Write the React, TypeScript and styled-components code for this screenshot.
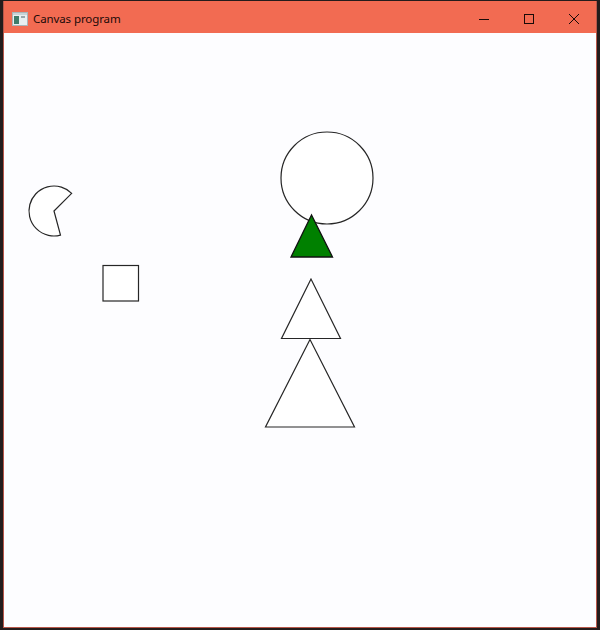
import React from "react";
import styled, { createGlobalStyle } from "styled-components";

const Global = createGlobalStyle`
  html, body { margin: 0; padding: 0; background: #241c1c; }
  body { width: 600px; height: 630px; overflow: hidden; font-family: "Noto Sans", "Open Sans", sans-serif; }
`;

const Desktop = styled.div`
  width: 600px;
  height: 630px;
  display: flex;
  padding: 1px 3px 2px 3px;
  box-sizing: border-box;
`;

const Window = styled.div`
  flex: 1;
  display: flex;
  flex-direction: column;
  border: 1px solid #b8574a;
  border-top: none;
  background: #fdfdff;
`;

const TitleBar = styled.div`
  height: 32px;
  box-sizing: border-box;
  padding-top: 3px;
  background: #f26b52;
  display: flex;
  align-items: center;
  padding-left: 8px;
  flex-shrink: 0;
`;

const AppIcon = styled.div`
  width: 16px;
  height: 16px;
  display: flex;
  align-items: center;
`;

const Title = styled.span`
  margin-left: 5px;
  font-size: 11.5px;
  letter-spacing: -0.1px;
  color: #1a0a08;
  flex: 1;
  padding-bottom: 1px;
`;

const Controls = styled.div`
  display: flex;
  height: 100%;
`;

const ControlButton = styled.div`
  width: 45px;
  height: 100%;
  display: flex;
  align-items: center;
  justify-content: center;
`;

const Content = styled.div`
  flex: 1;
  position: relative;
`;

const Canvas = styled.svg`
  display: block;
  width: 100%;
  height: 100%;
`;

const stroke = "#262626";

export default function App() {
  const cx = 54, cy = 211, r = 25;
  const a1 = (-45 * Math.PI) / 180;
  const a2 = (75 * Math.PI) / 180;
  const p1 = [cx + r * Math.cos(a2), cy + r * Math.sin(a2)];
  const p2 = [cx + r * Math.cos(a1), cy + r * Math.sin(a1)];
  const pac = `M ${cx} ${cy} L ${p1[0]} ${p1[1]} A ${r} ${r} 0 1 1 ${p2[0]} ${p2[1]} Z`;
  return (
    <>
      <Global />
      <Desktop>
        <Window>
          <TitleBar>
            <AppIcon>
              <svg width="16" height="14" viewBox="0 0 16 14">
                <rect x="0.5" y="0.5" width="15" height="13" fill="#e8eef0" stroke="#a9b4b8" />
                <rect x="1" y="1" width="14" height="2" fill="#c9d3d6" />
                <rect x="2" y="4" width="5" height="8" fill="#3f7c6a" />
                <rect x="9" y="4" width="4" height="2" fill="#9aa6aa" />
              </svg>
            </AppIcon>
            <Title>Canvas program</Title>
            <Controls>
              <ControlButton>
                <svg width="10" height="10" viewBox="0 0 10 10">
                  <line x1="0" y1="5.5" x2="10" y2="5.5" stroke="#1a0a08" strokeWidth="1" />
                </svg>
              </ControlButton>
              <ControlButton>
                <svg width="10" height="10" viewBox="0 0 10 10">
                  <rect x="0.5" y="0.5" width="9" height="9" fill="none" stroke="#1a0a08" strokeWidth="1" />
                </svg>
              </ControlButton>
              <ControlButton>
                <svg width="10" height="10" viewBox="0 0 10 10">
                  <path d="M0 0 L10 10 M10 0 L0 10" stroke="#1a0a08" strokeWidth="1" />
                </svg>
              </ControlButton>
            </Controls>
          </TitleBar>
          <Content>
            <Canvas viewBox="4 33 592 594" preserveAspectRatio="xMinYMin meet">
              <path d={pac} fill="#fff" stroke={stroke} strokeWidth="1.2" />
              <rect x="103" y="265.5" width="35.5" height="35.5" fill="#fff" stroke={stroke} strokeWidth="1.2" />
              <circle cx="327" cy="178" r="46" fill="#fff" stroke={stroke} strokeWidth="1.2" />
              <polygon points="311.5,215 291,257 332.5,257" fill="#008000" stroke="#111" strokeWidth="1.3" />
              <polygon points="311,279 281.5,338.5 340.5,338.5" fill="#fff" stroke={stroke} strokeWidth="1.2" />
              <polygon points="310,339.5 265.5,427 354.5,427" fill="#fff" stroke={stroke} strokeWidth="1.2" />
            </Canvas>
          </Content>
        </Window>
      </Desktop>
    </>
  );
}
